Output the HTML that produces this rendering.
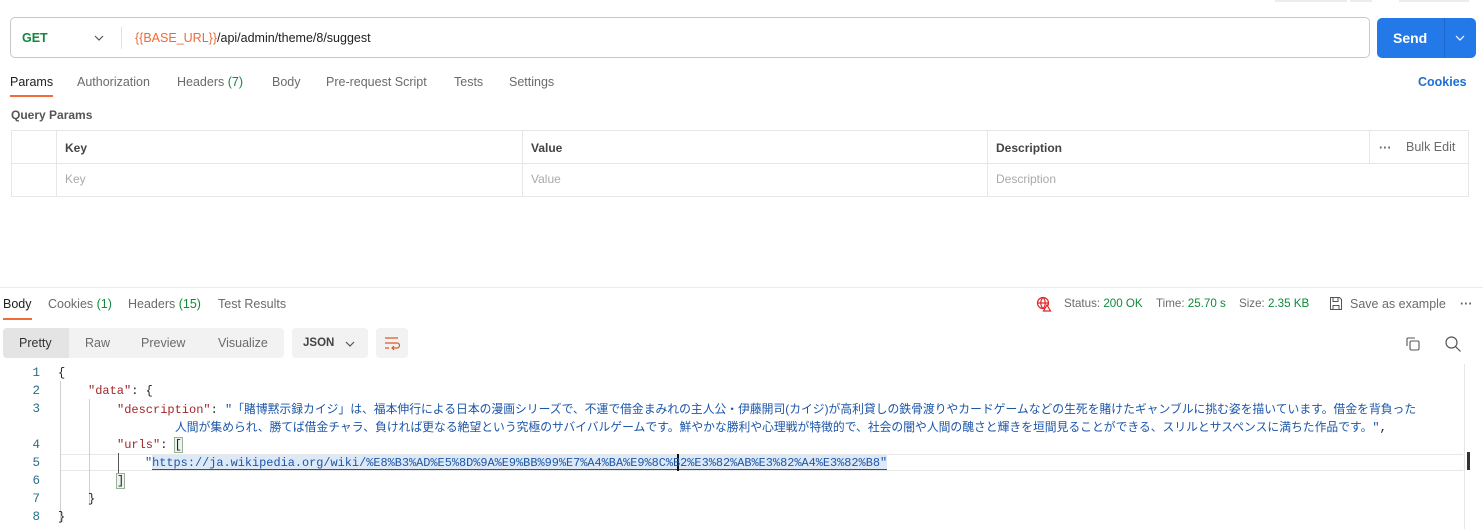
<!DOCTYPE html>
<html><head><meta charset="utf-8"><style>
*{box-sizing:border-box;margin:0;padding:0}
body{width:1483px;height:529px;overflow:hidden;background:#fff;font-family:"Liberation Sans","Noto Sans CJK JP",sans-serif;color:#212121;position:relative;font-size:12.5px}
.a{position:absolute;white-space:nowrap}
.g{color:#0f8a3c}
.mut{color:#6b6b6b}
.code{font-family:"Liberation Mono","Noto Sans CJK JP",monospace;font-size:12px;line-height:18px}
.jp{font-family:"Liberation Sans","Noto Sans CJK JP",sans-serif;font-size:11.8px;color:#1c56a8}
.ln{position:absolute;left:24px;width:16px;text-align:right;color:#2a6f8a;font-family:"Liberation Mono",monospace;font-size:12.5px;line-height:18px}
.key{color:#a3262a}
.str{color:#1c56a8}
.guide{position:absolute;width:1px;background:#cfcfcf}
</style></head><body>
<div class="a" style="left:1275px;top:0;width:72px;height:2px;background:#ececec"></div>
<div class="a" style="left:1350px;top:0;width:22px;height:2px;background:#ececec"></div>
<div class="a" style="left:1399px;top:0;width:70px;height:2px;background:#ececec"></div>
<div class="a" style="left:10px;top:17px;width:1360px;height:41px;border:1px solid #c8c8c8;border-radius:5px"></div>
<div class="a" style="left:22px;top:31px;font-weight:bold;color:#0f8a3c;font-size:12.5px">GET</div>
<svg class="a" style="left:93px;top:34px" width="12" height="8" viewBox="0 0 12 8"><path d="M2 2l4 4 4-4" fill="none" stroke="#555" stroke-width="1.2"/></svg>
<div class="a" style="left:121px;top:27px;width:1px;height:22px;background:#e0e0e0"></div>
<div class="a" style="left:135px;top:31px;font-size:12.5px"><span style="color:#f06a35">{{BASE_URL}}</span>/api/admin/theme/8/suggest</div>
<div class="a" style="left:1377px;top:18px;width:99px;height:40px;background:#2479e8;border-radius:5px"></div>
<div class="a" style="left:1444px;top:18px;width:1px;height:40px;background:#1c66cc"></div>
<div class="a" style="left:1393px;top:30px;color:#fff;font-weight:bold;font-size:14px">Send</div>
<svg class="a" style="left:1454px;top:34px" width="12" height="8" viewBox="0 0 12 8"><path d="M2 2l4 4 4-4" fill="none" stroke="#fff" stroke-width="1.2"/></svg>
<div class="a" style="left:10px;top:75px">Params</div>
<div class="a" style="left:10px;top:95px;width:43px;height:2px;background:#f26b3a"></div>
<div class="a mut" style="left:77px;top:75px">Authorization</div>
<div class="a mut" style="left:177px;top:75px">Headers <span class="g">(7)</span></div>
<div class="a mut" style="left:272px;top:75px">Body</div>
<div class="a mut" style="left:326px;top:75px">Pre-request Script</div>
<div class="a mut" style="left:454px;top:75px">Tests</div>
<div class="a mut" style="left:509px;top:75px">Settings</div>
<div class="a" style="left:1418px;top:75px;color:#1e6fd1;font-weight:bold">Cookies</div>
<div class="a" style="left:11px;top:108px;font-weight:bold;color:#555;font-size:12px">Query Params</div>
<div class="a" style="left:11px;top:130px;width:1458px;height:67px;border:1px solid #e6e6e6"></div>
<div class="a" style="left:11px;top:163px;width:1458px;height:1px;background:#e6e6e6"></div>
<div class="a" style="left:56px;top:130px;width:1px;height:67px;background:#e6e6e6"></div>
<div class="a" style="left:522px;top:130px;width:1px;height:67px;background:#e6e6e6"></div>
<div class="a" style="left:987px;top:130px;width:1px;height:67px;background:#e6e6e6"></div>
<div class="a" style="left:1369px;top:130px;width:1px;height:33px;background:#e6e6e6"></div>
<div class="a" style="left:65px;top:141px;font-weight:bold;color:#444;font-size:12px">Key</div>
<div class="a" style="left:531px;top:141px;font-weight:bold;color:#444;font-size:12px">Value</div>
<div class="a" style="left:996px;top:141px;font-weight:bold;color:#444;font-size:12px">Description</div>
<div class="a" style="left:1379px;top:141px;color:#666;font-weight:bold">···</div>
<div class="a mut" style="left:1406px;top:140px">Bulk Edit</div>
<div class="a" style="left:65px;top:172px;color:#aaa;font-size:12px">Key</div>
<div class="a" style="left:531px;top:172px;color:#aaa;font-size:12px">Value</div>
<div class="a" style="left:996px;top:172px;color:#aaa;font-size:12px">Description</div>
<div class="a" style="left:0;top:287px;width:1483px;height:1px;background:#ececec"></div>
<div class="a" style="left:3px;top:297px">Body</div>
<div class="a" style="left:3px;top:318px;width:29px;height:2px;background:#f26b3a"></div>
<div class="a mut" style="left:48px;top:297px">Cookies <span class="g">(1)</span></div>
<div class="a mut" style="left:128px;top:297px">Headers <span class="g">(15)</span></div>
<div class="a mut" style="left:218px;top:297px">Test Results</div>
<svg class="a" style="left:1036px;top:296px" width="16" height="16" viewBox="0 0 16 16"><g fill="none" stroke="#e0262b" stroke-width="1.2"><circle cx="7" cy="7" r="5.5"/><path d="M1.5 7h11M7 1.5c-3 3-3 8 0 11M7 1.5c3 3 3 8 0 11"/><path d="M11 9l3.5 6h-7z" fill="#fff"/></g></svg>
<div class="a mut" style="left:1064px;top:297px;font-size:11.6px">Status: <span class="g">200 OK</span></div>
<div class="a mut" style="left:1156px;top:297px;font-size:11.6px">Time: <span class="g">25.70 s</span></div>
<div class="a mut" style="left:1239px;top:297px;font-size:11.6px">Size: <span class="g">2.35 KB</span></div>
<svg class="a" style="left:1329px;top:296px" width="14" height="15" viewBox="0 0 14 15"><path d="M1.5 1.5h9l2 2v10h-11z M4 1.5v4h5v-4 M4 13.5v-4h6v4" fill="none" stroke="#555" stroke-width="1"/></svg>
<div class="a mut" style="left:1350px;top:297px">Save as example</div>
<div class="a" style="left:1460px;top:297px;color:#666;font-weight:bold">···</div>
<div class="a" style="left:3px;top:328px;width:281px;height:30px;background:#f2f2f2;border-radius:4px"></div>
<div class="a" style="left:3px;top:328px;width:66px;height:30px;background:#e4e4e4;border-radius:4px 0 0 4px"></div>
<div class="a" style="left:19px;top:336px;color:#333">Pretty</div>
<div class="a mut" style="left:85px;top:336px">Raw</div>
<div class="a mut" style="left:141px;top:336px">Preview</div>
<div class="a mut" style="left:218px;top:336px">Visualize</div>
<div class="a" style="left:292px;top:328px;width:76px;height:30px;background:#f2f2f2;border-radius:4px"></div>
<div class="a" style="left:303px;top:337px;font-weight:bold;color:#444;font-size:11.5px">JSON</div>
<svg class="a" style="left:344px;top:340px" width="12" height="8" viewBox="0 0 12 8"><path d="M2 2l4 4 4-4" fill="none" stroke="#555" stroke-width="1.2"/></svg>
<div class="a" style="left:376px;top:328px;width:32px;height:30px;background:#f2f2f2;border-radius:4px"></div>
<svg class="a" style="left:383px;top:335px" width="18" height="16" viewBox="0 0 18 16"><g fill="none" stroke="#e05a2b" stroke-width="1.2"><path d="M2 3h13M2 8h12a2.5 2.5 0 010 5H9M2 13h4M11 11l-2 2 2 2"/></g></svg>
<svg class="a" style="left:1405px;top:336px" width="16" height="16" viewBox="0 0 16 16"><g fill="none" stroke="#555" stroke-width="1.1"><rect x="5" y="5" width="9" height="9" rx="1.5"/><path d="M2 10V3a1 1 0 011-1h7"/></g></svg>
<svg class="a" style="left:1444px;top:335px" width="18" height="18" viewBox="0 0 18 18"><g fill="none" stroke="#555" stroke-width="1.2"><circle cx="7.5" cy="7.5" r="5.5"/><path d="M11.5 11.5l5 5"/></g></svg>
<div class="a" style="left:1464px;top:364px;width:19px;height:165px;border-left:1px solid #e6e6e6"></div>
<div class="a" style="left:1467px;top:452px;width:3px;height:18px;background:#333"></div>
<div class="a" style="left:60px;top:454px;width:1403px;height:17px;border-top:1px solid #e8e8e8;border-bottom:1px solid #e8e8e8"></div>
<div class="a" style="left:152px;top:455px;width:735px;height:15px;background:#dde9f7;border-bottom:1.5px solid #1c56a8"></div>
<div class="guide" style="left:60px;top:381px;height:142px"></div>
<div class="guide" style="left:89px;top:399px;height:106px"></div>
<div class="guide" style="left:118px;top:453px;height:35px;background:#555"></div>
<div class="a" style="left:677px;top:454px;width:1.5px;height:17px;background:#111"></div>
<div class="ln" style="top:364px">1</div>
<div class="ln" style="top:382px">2</div>
<div class="ln" style="top:400px">3</div>
<div class="ln" style="top:436px">4</div>
<div class="ln" style="top:454px">5</div>
<div class="ln" style="top:472px">6</div>
<div class="ln" style="top:490px">7</div>
<div class="ln" style="top:508px">8</div>
<div class="a code" style="left:58px;top:364px">{</div>
<div class="a code" style="left:88px;top:382px"><span class="key">"data"</span>: {</div>
<div class="a code" style="left:117px;top:400px"><span class="key">"description"</span>: <span class="str">"</span><span class="jp">「賭博黙示録カイジ」は、福本伸行による日本の漫画シリーズで、不運で借金まみれの主人公・伊藤開司(カイジ)が高利貸しの鉄骨渡りやカードゲームなどの生死を賭けたギャンブルに挑む姿を描いています。借金を背負った</span></div>
<div class="a code" style="left:175px;top:418px"><span class="jp">人間が集められ、勝てば借金チャラ、負ければ更なる絶望という究極のサバイバルゲームです。鮮やかな勝利や心理戦が特徴的で、社会の闇や人間の醜さと輝きを垣間見ることができる、スリルとサスペンスに満ちた作品です。</span><span class="str">"</span>,</div>
<div class="a code" style="left:117px;top:436px"><span class="key">"urls"</span>: <span style="outline:1px solid #9ab09a;background:#eef3ee">[</span></div>
<div class="a code str" style="left:145px;top:454px;font-size:11.9px">"https://ja.wikipedia.org/wiki/%E8%B3%AD%E5%8D%9A%E9%BB%99%E7%A4%BA%E9%8C%B2%E3%82%AB%E3%82%A4%E3%82%B8"</div>
<div class="a code" style="left:117px;top:472px"><span style="outline:1px solid #9ab09a;background:#eef3ee">]</span></div>
<div class="a code" style="left:88px;top:490px">}</div>
<div class="a code" style="left:58px;top:508px">}</div>
</body></html>
